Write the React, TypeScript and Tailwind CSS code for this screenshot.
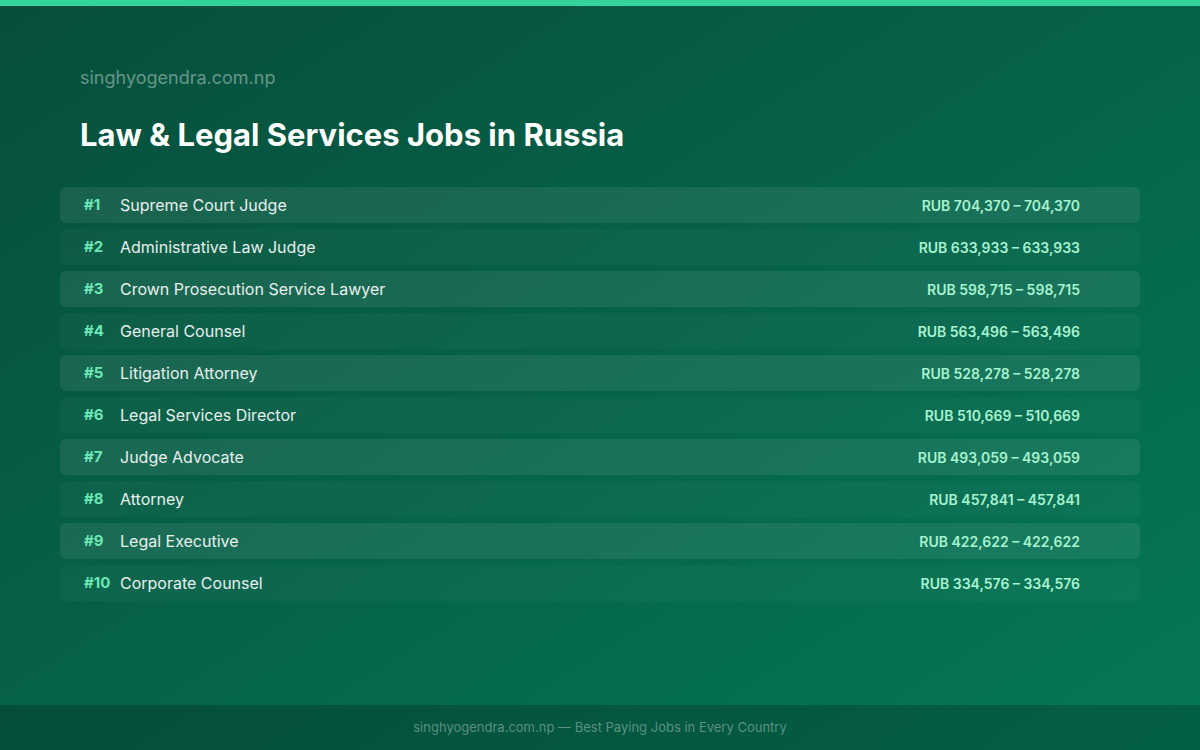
import React from 'react';

const jobs = [
  ['Supreme Court Judge', 'RUB 704,370 – 704,370'],
  ['Administrative Law Judge', 'RUB 633,933 – 633,933'],
  ['Crown Prosecution Service Lawyer', 'RUB 598,715 – 598,715'],
  ['General Counsel', 'RUB 563,496 – 563,496'],
  ['Litigation Attorney', 'RUB 528,278 – 528,278'],
  ['Legal Services Director', 'RUB 510,669 – 510,669'],
  ['Judge Advocate', 'RUB 493,059 – 493,059'],
  ['Attorney', 'RUB 457,841 – 457,841'],
  ['Legal Executive', 'RUB 422,622 – 422,622'],
  ['Corporate Counsel', 'RUB 334,576 – 334,576'],
];

const App = () => {
  return (
    <div className="w-[1200px] h-[750px] flex flex-col bg-gradient-to-br from-[#064e3b] to-[#047857] font-[Inter,sans-serif]">
      <div className="h-[6px] bg-[#34d399]" />
      <div className="flex-1 px-[60px]">
        <div className="px-5 pt-[60px] text-[18px] text-white/40 leading-6">singhyogendra.com.np</div>
        <h1 className="px-5 mt-[25px] text-[31px] font-bold text-white leading-10">Law &amp; Legal Services Jobs in Russia</h1>
        <div className="mt-[32px] flex flex-col gap-[6px]">
          {jobs.map(([title, pay], i) => (
            <div
              key={title}
              className={`h-9 flex items-center pl-6 pr-[60px] rounded-md ${i % 2 === 0 ? 'bg-white/[0.08]' : 'bg-white/[0.03]'}`}
            >
              <span className="w-9 text-[15px] font-bold text-[#6ee7b7]">#{i + 1}</span>
              <span className="flex-1 text-[16px] text-white/90">{title}</span>
              <span className="text-[14px] font-semibold text-[#a7f3d0]">{pay}</span>
            </div>
          ))}
        </div>
      </div>
      <div className="h-[45px] bg-black/20 flex items-center justify-center text-[13px] text-white/35">
        singhyogendra.com.np — Best Paying Jobs in Every Country
      </div>
    </div>
  );
};

export default App;
